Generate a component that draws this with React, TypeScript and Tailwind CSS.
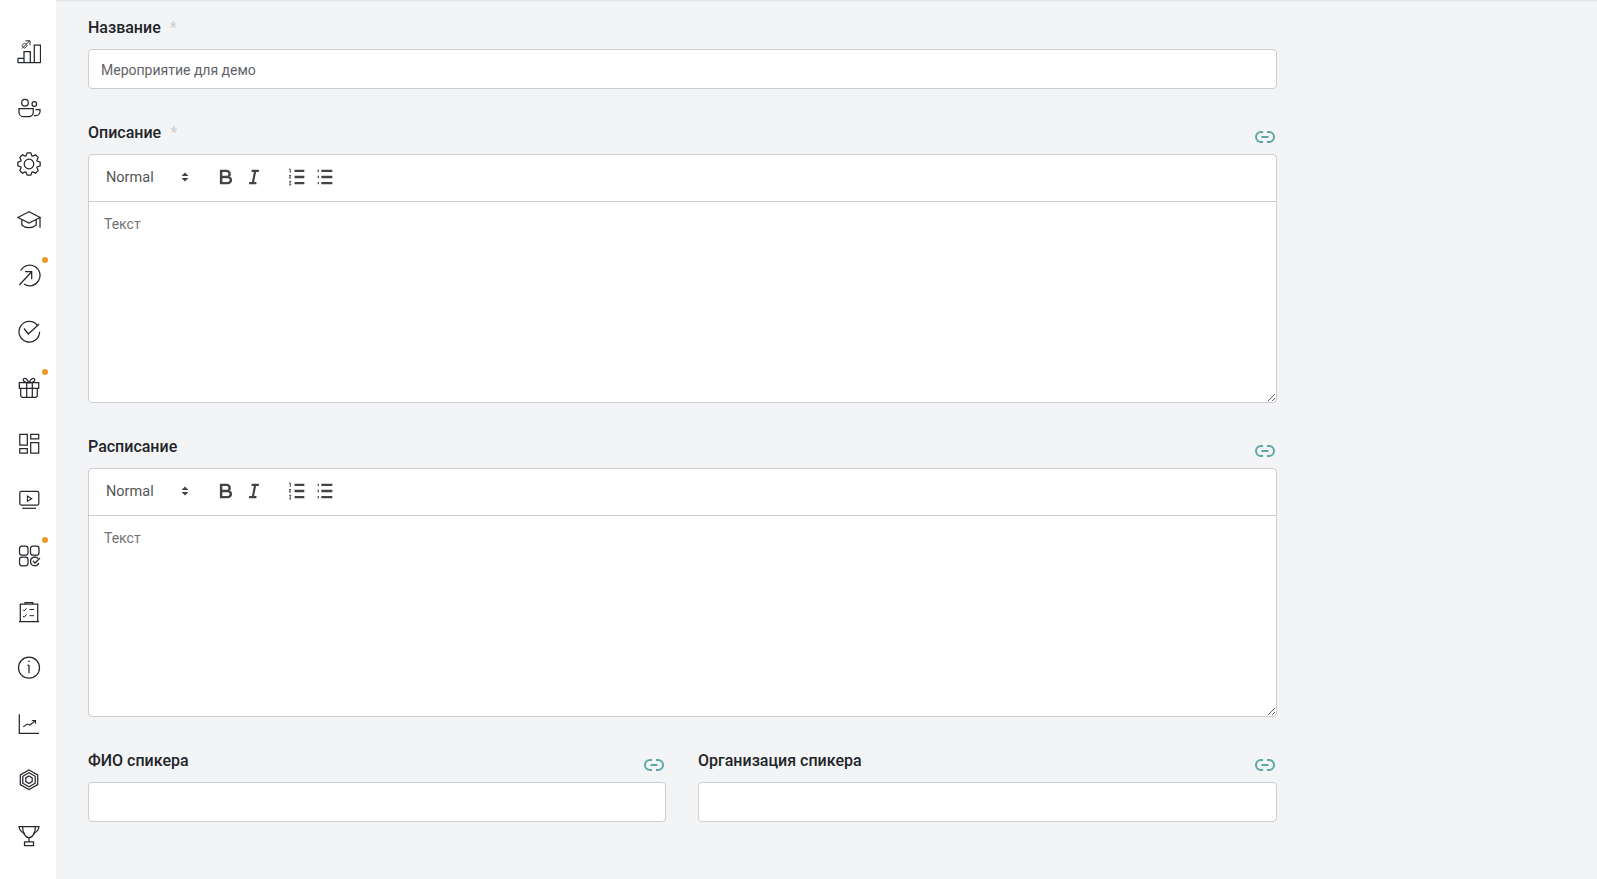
import type { ReactNode } from "react";

const font = "font-['Roboto',sans-serif]";

const gearPath = (() => {
  const pts: string[] = [];
  for (let i = 0; i < 8; i++) {
    const a = (i * Math.PI) / 4 - Math.PI / 2;
    const at = (r: number, d: number) =>
      `${(12 + r * Math.cos(a + d)).toFixed(2)} ${(12 + r * Math.sin(a + d)).toFixed(2)}`;
    pts.push(`${i === 0 ? "M" : "L"}${at(8.6, -0.36)}`);
    pts.push(`L${at(11.3, -0.16)}`);
    pts.push(`L${at(11.3, 0.16)}`);
    pts.push(`L${at(8.6, 0.36)}`);
  }
  return pts.join(" ") + "Z";
})();

const sidebarIcons: { dot?: boolean; icon: ReactNode }[] = [
  {
    icon: (
      <>
        <path d="M1 22.700v-4.400h6v4.400M7 22.700V11.700h6.300v11M12 22.700h5.300M17.300 22.700V5h6.200v17.700M.500 22.700h23.200" />
        <path d="M5 8.500 12.500 1M8.500 .8h4.500v4.500" strokeWidth="1" />
        <path d="M4.800 5.500 7.500 3l2.800 2.800L7.800 8.300z" strokeWidth=".9" />
      </>
    ),
  },
  {
    icon: (
      <>
        <circle cx="8" cy="6.700" r="3.300" />
        <circle cx="17.300" cy="8" r="2.300" />
        <path d="M2 12.500h14.300v3.700a4.500 4.500 0 0 1-4.500 4.500H6.500A4.500 4.500 0 0 1 2 16.200z" />
        <path d="M18.500 13.500h4.500v2a4 4 0 0 1-4 4h-2" />
      </>
    ),
  },
  {
    icon: (
      <>
        <circle cx="12" cy="12" r="4.800" />
        <path d={gearPath} />
      </>
    ),
  },
  {
    icon: (
      <>
        <path d="M12 3.700.8 9.500 12 15l11.200-5.500z" />
        <path d="M4.800 12v5c2 1.900 4.400 2.700 7.200 2.700s5.200-.8 7.200-2.700v-5" />
        <path d="M23 10v9.800" />
      </>
    ),
  },
  {
    dot: true,
    icon: (
      <>
        <path d="M3.700 6.500A10.300 10.300 0 1 1 7 20" />
        <path d="M2.300 21 14.700 7.700M8 7.700h6.700v7.600" />
      </>
    ),
  },
  {
    icon: (
      <>
        <path d="M20.500 5.500A10.300 10.300 0 1 0 22.600 11.700" />
        <path d="M7 8.500l4.300 5.500L22 4.300" />
      </>
    ),
  },
  {
    dot: true,
    icon: (
      <>
        <path d="M2.300 6.700h19.400v5.600H2.300zM3.700 12.300v7a2 2 0 0 0 2 2h12.600a2 2 0 0 0 2-2v-7M9.700 6.700v14.600M15.300 6.700v14.600" />
        <path d="M12 6.700C10.500 3.500 8.500 2 7 2.500S5.800 6.700 12 6.700c6.200 0 6.500-3.700 5-4.200S13.500 3.500 12 6.700z" />
      </>
    ),
  },
  {
    icon: <path d="M2.800 2.300h7.500v10.900H2.800zM13.700 2.300h8v4.500h-8zM2.800 16.500h7.500v4.700H2.800zM13.700 10.600h8v10.600h-8z" />,
  },
  {
    icon: (
      <>
        <rect x="2.800" y="3.300" width="19" height="13.700" rx="1.500" />
        <path d="M10.400 8v5.300l4.300-2.600z" strokeWidth="1.100" />
        <path d="M5.300 20.300H19" />
      </>
    ),
  },
  {
    dot: true,
    icon: (
      <>
        <rect x="2.500" y="2.200" width="8.500" height="9" rx="2.500" />
        <rect x="13.500" y="2.200" width="8.500" height="9" rx="2.500" />
        <rect x="2.500" y="13.200" width="8.500" height="8.600" rx="2.500" />
        <path d="M21 14.500a4.300 4.300 0 0 0-7.500 3 4.300 4.300 0 0 0 8.300 1.500" />
        <path d="M16 17l2 2 5-5" />
      </>
    ),
  },
  {
    icon: (
      <>
        <path d="M3.300 21.700V4h17.400v17.700M2 21.700h20" />
        <path d="M8 4V2.500h7.700V4" />
        <path d="M6 9.700l1.200 1.200 2.300-2.700M12.500 9.500h4.500M6 16l1.200 1.200 2.300-2.700M12.500 15.700h4.500" strokeWidth="1" />
      </>
    ),
  },
  {
    icon: (
      <>
        <circle cx="12" cy="11.700" r="10.500" />
        <path d="M12 9v8.300M10.500 9H12" />
        <path d="M12 4.700v1.300" strokeWidth="1.500" />
      </>
    ),
  },
  {
    icon: (
      <>
        <path d="M2.300 2.300v19H22" />
        <path d="M6.300 14.700l4-2.700 2.500 1L18 9" strokeWidth="1.100" />
        <path d="M14.800 8.500H18.500v3.300" strokeWidth="1.100" />
      </>
    ),
  },
  {
    icon: (
      <>
        <path d="M12 2l8.700 4.900v9.700L12 21.500l-8.700-4.900V6.900z" />
        <path d="M12 4.800l6.200 3.500v6.900L12 18.700l-6.200-3.500V8.300z" />
        <path d="M12 8l3.200 1.900v3.700L12 15.500l-3.200-1.900V9.900z" />
      </>
    ),
  },
  {
    icon: (
      <>
        <path d="M2 2.500h20c-.500 3.500-2 5.500-5 6.500-.800 3-2.500 4.500-5 4.500S7.800 12 7 9C4 8 2.500 6 2 2.500z" />
        <path d="M5.700 2.500c0 4.500 1 7 1.800 8M18.300 2.500c0 4.500-1 7-1.800 8M12 13.500v4.200" />
        <path d="M7.500 17.800h9v3.700h-9z" />
      </>
    ),
  },
];

function SideItem({ dot, children }: { dot?: boolean; children: ReactNode }) {
  return (
    <div className="relative flex h-14 w-14 shrink-0 items-center justify-center pl-[2px]">
      <svg
        viewBox="0 0 24 24"
        fill="none"
        stroke="#24282c"
        strokeWidth="1.250"
        className="h-6 w-6"
      >
        {children}
      </svg>
      {dot && (
        <span className="absolute left-[42px] top-[9px] h-[6px] w-[6px] rounded-full bg-[#e8982f]" />
      )}
    </div>
  );
}

function LinkIcon() {
  return (
    <svg
      viewBox="0 0 20 12"
      fill="none"
      stroke="#5ba8a2"
      strokeWidth="2"
      className="mb-px mr-[2px] h-3 w-5 shrink-0"
    >
      <path d="M8 1H6a5 5 0 0 0 0 10h2M12 1h2a5 5 0 0 1 0 10h-2M6.500 6h7" />
    </svg>
  );
}

function FieldLabel({
  title,
  required,
  link,
}: {
  title: string;
  required?: boolean;
  link?: boolean;
}) {
  return (
    <div className="mb-[10px] flex h-6 items-end justify-between">
      <label className="self-center pt-[2px] text-base font-medium leading-6 text-[#212529]">
        {title}
        {required && <span className="ml-[9px] text-[#cfd1d4]">*</span>}
      </label>
      {link && <LinkIcon />}
    </div>
  );
}

function TextInput({ value }: { value?: string }) {
  return (
    <div className="flex h-10 items-center rounded-[4px] border border-[#ccced1] bg-white px-3 pt-[2px] text-sm text-[#5f6368]">
      {value}
    </div>
  );
}

function ToolbarIcons() {
  return (
    <>
      <div className="mr-[15px] flex w-[98px] items-center justify-between pl-[7px] pr-2 text-[14.500px] text-[#555]">
        <span className="pt-[2px]">Normal</span>
        <svg viewBox="0 0 8 12" className="h-3 w-2" fill="#444">
          <path d="M4 1.500 7.500 5h-7zM4 10.500.5 7h7z" />
        </svg>
      </div>
      <div className="mr-[15px] flex">
        <button className="flex h-6 w-7 items-center justify-center">
          <svg viewBox="0 0 18 18" fill="none" stroke="#444" strokeWidth="2" className="h-[22px] w-[22px] shrink-0">
            <path d="M5,4H9.500A2.500,2.500,0,0,1,12,6.500v0A2.500,2.500,0,0,1,9.500,9H5ZM5,9h5.500A2.500,2.500,0,0,1,13,11.500v0A2.500,2.500,0,0,1,10.500,14H5Z" />
          </svg>
        </button>
        <button className="flex h-6 w-7 items-center justify-center">
          <svg viewBox="0 0 18 18" fill="none" stroke="#444" strokeWidth="1.800" className="h-[22px] w-[22px] shrink-0">
            <path d="M7 4h6M5 14h6M8 14l2-10" />
          </svg>
        </button>
      </div>
      <div className="flex">
        <button className="flex h-6 w-7 items-center justify-center">
          <svg viewBox="0 0 18 18" fill="none" stroke="#444" strokeWidth="2" className="h-[22px] w-[22px] shrink-0">
            <path d="M7 4h8M7 9h8M7 14h8" />
            <path d="M2.500 2.500h1v3M2.500 7.800h1.500l-1.500 2h1.600M2.500 12.500h1.500l-.8 1.500.8 1.500h-1.500" strokeWidth=".8" />
          </svg>
        </button>
        <button className="flex h-6 w-7 items-center justify-center">
          <svg viewBox="0 0 18 18" fill="none" stroke="#444" strokeWidth="2" className="h-[22px] w-[22px] shrink-0">
            <path d="M6 4h9M6 9h9M6 14h9M3 4h1M3 9h1M3 14h1" />
          </svg>
        </button>
      </div>
    </>
  );
}

function Editor() {
  return (
    <div className="rounded-[4px] border border-[#ccced1] bg-white">
      <div className="flex h-[47px] items-center border-b border-[#ccced1] pb-[2px] pl-[10px]">
        <ToolbarIcons />
      </div>
      <div className="h-[200px] resize-y overflow-auto px-[15px] py-3 text-sm leading-[21px] text-[#737373]">
        Текст
      </div>
    </div>
  );
}

export default function App() {
  return (
    <div className={`flex h-screen overflow-hidden bg-[#f3f4f6] ${font}`}>
      {/* SIDEBAR */}
      <aside className="flex w-14 shrink-0 flex-col bg-white pt-6">
        {sidebarIcons.map((item, i) => (
          <SideItem key={i} dot={item.dot}>
            {item.icon}
          </SideItem>
        ))}
      </aside>

      {/* FORM */}
      <main className="flex-1 pl-8 pt-[15px] shadow-[inset_0_2px_2px_-1px_rgba(0,0,0,0.08)]">
        <div className="flex w-[1189px] flex-col gap-[31px]">
          <div>
            <FieldLabel title="Название" required />
            <TextInput value="Мероприятие для демо" />
          </div>
          <div>
            <FieldLabel title="Описание" required link />
            <Editor />
          </div>
          <div>
            <FieldLabel title="Расписание" link />
            <Editor />
          </div>
          <div className="grid grid-cols-[578px_579px] gap-8">
            <div>
              <FieldLabel title="ФИО спикера" link />
              <TextInput />
            </div>
            <div>
              <FieldLabel title="Организация спикера" link />
              <TextInput />
            </div>
          </div>
        </div>
      </main>
    </div>
  );
}
